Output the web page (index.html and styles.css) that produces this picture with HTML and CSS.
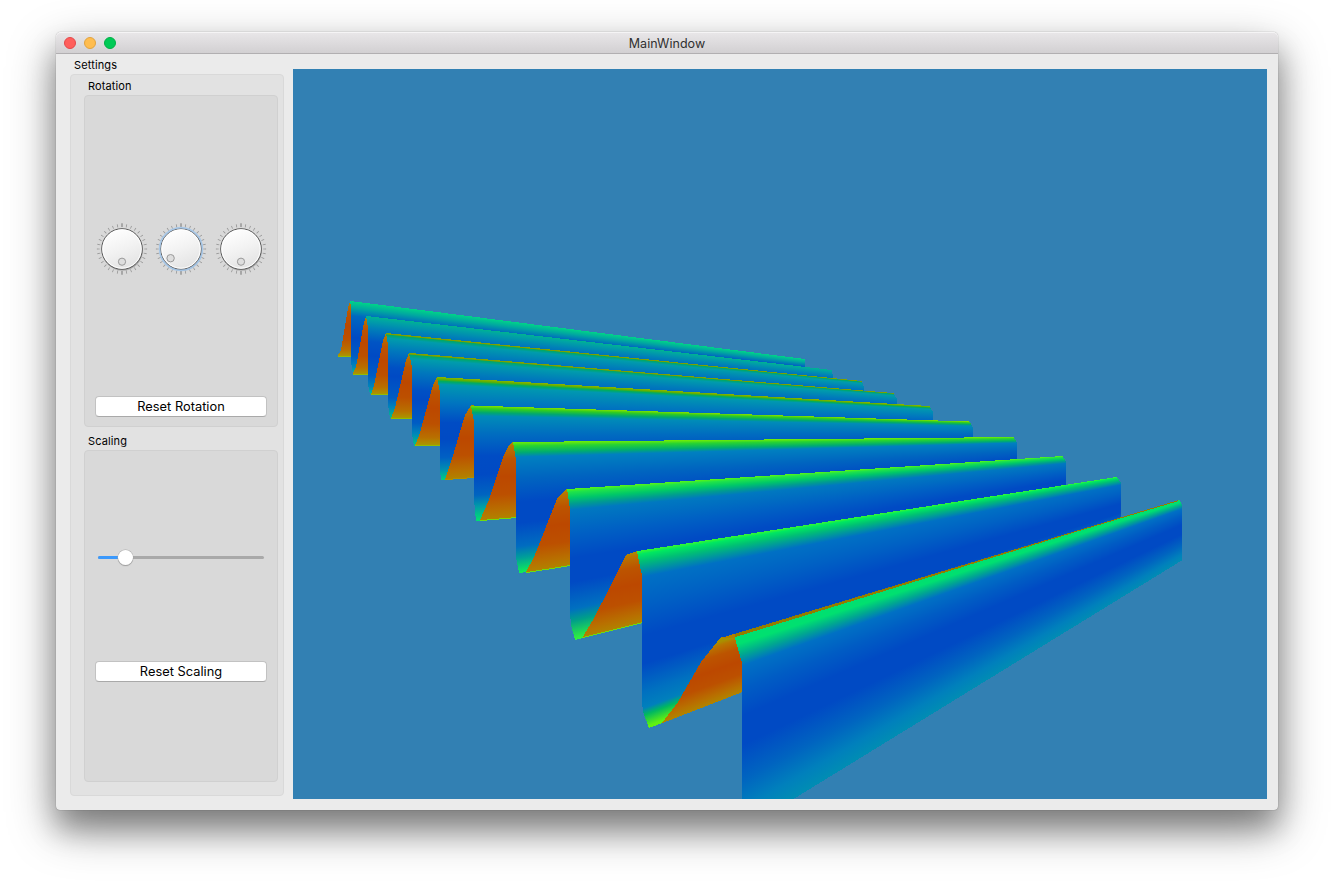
FILE: index.html
```html
<!DOCTYPE html>
<html lang="en">
<head>
<meta charset="utf-8">
<title>MainWindow</title>
<link rel="stylesheet" href="styles.css">
</head>
<body>
<svg width="0" height="0" class="defs">
  <defs>
    <linearGradient id="face" x1="0.3" y1="0" x2="0.7" y2="1"><stop offset="0" stop-color="#fff"/><stop offset="0.5" stop-color="#f2f2f2"/><stop offset="1" stop-color="#e2e2e2"/></linearGradient>
    <g id="dial">
      <circle class="ticks" cx="27" cy="27" r="23.6" pathLength="320"/>
      <path class="major" d="M27 1v4M27 49v4"/>
      <circle class="shade" cx="27.5" cy="28.2" r="20.5"/>
      <circle class="rim" cx="27" cy="27" r="20.3"/>
      <circle class="inner" cx="27" cy="27" r="19.2"/>
    </g>
  </defs>
</svg>
<main class="window">
  <header class="titlebar">
    <div class="lights"><i class="close"></i><i class="min"></i><i class="max"></i></div>
    <span class="title">MainWindow</span>
  </header>
  <div class="content">
    <aside class="settings">
      <h1 class="label">Settings</h1>
      <div class="group outer">
        <h2 class="label">Rotation</h2>
        <section class="group rotation">
          <div class="dials">
            <svg class="dial" viewBox="0 0 54 54"><use href="#dial"/><circle class="dot" cx="27" cy="39.7" r="3.6"/></svg>
            <svg class="dial active" viewBox="0 0 54 54"><use href="#dial"/><circle class="glow" cx="27" cy="27" r="21.4"/><circle class="dot" cx="16.6" cy="36.2" r="3.7"/></svg>
            <svg class="dial" viewBox="0 0 54 54"><use href="#dial"/><circle class="dot" cx="27" cy="39.7" r="3.6"/></svg>
          </div>
          <button class="button">Reset Rotation</button>
        </section>
        <h2 class="label second">Scaling</h2>
        <section class="group scaling">
          <div class="slider"><div class="fill"></div><div class="thumb"></div></div>
          <button class="button">Reset Scaling</button>
        </section>
      </div>
    </aside>
    <canvas id="plot" class="plot" width="974" height="730"></canvas>
  </div>
</main>
<script src="plot.js"></script>
</body>
</html>
```

FILE: styles.css
```css
* { box-sizing: border-box; }
body { margin: 0; padding: 32px 56px 0; width: 1334px; height: 890px; overflow: hidden; background: #fff; font-family: Inter, "Liberation Sans", sans-serif; color: #000; }
.defs { display: block; position: absolute; }
.window { width: 1222px; height: 778px; border-radius: 5px 5px 4px 4px; background: #ebebeb; box-shadow: 0 0 1px rgba(0,0,0,.55), 0 19px 28px rgba(0,0,0,.28), 0 18px 48px rgba(0,0,0,.38); }
.titlebar { height: 22px; display: grid; grid-template-columns: 100px 1fr 100px; align-items: center; border-bottom: 1px solid #b1afb1; border-radius: 5px 5px 0 0; background: linear-gradient(#e9e7e9, #d2d0d2); box-shadow: inset 0 1px #f5f4f5; }
.lights { display: flex; gap: 8px; padding-left: 8px; }
.lights i { width: 12px; height: 12px; border-radius: 50%; border: 1px solid; }
.close { background: #ff5f5c; border-color: #e5484a !important; }
.min { background: #ffbd4f; border-color: #e2a33e !important; }
.max { background: #00ca56; border-color: #00b045 !important; }
.title { text-align: center; font-size: 12.5px; line-height: 18px; padding-top: 2px; letter-spacing: .05px; color: #303030; }
.content { display: flex; padding: 0 11px 0 14px; gap: 9px; height: 756px; }
.settings { width: 214px; display: flex; flex-direction: column; }
.label { margin: 0; font-size: 11px; font-weight: 400; line-height: 14px; letter-spacing: .12px; }
.settings > .label { padding: 4px 0 0 4px; height: 20px; }
.group { border: 1px solid #d9d9d9; border-radius: 4px; }
.outer { height: 722px; padding: 0 5px 0 13px; background: #e2e2e2; }
.outer > .label { height: 20px; padding: 4px 0 0 4px; }
.outer > .second { height: 23px; padding-top: 7px; }
.rotation, .scaling { height: 332px; background: #d9d9d9; border-color: #d0d0d0; padding: 0 10px; display: flex; flex-direction: column; }
.rotation { padding-top: 126px; }
.dials { display: flex; gap: 5.5px; margin-left: -.5px; height: 54px; }
.dial { width: 54px; height: 54px; flex: none; overflow: visible; }
.ticks { fill: none; stroke: #999; stroke-width: 3; stroke-dasharray: 1.8 8.2; stroke-dashoffset: .9; }
.major { stroke: #8e8e8e; }
.shade { fill: rgba(0,0,0,.2); }
.rim { fill: url(#face); stroke: #555; stroke-width: 1; }
.inner { fill: none; stroke: #fff; stroke-width: 1; }
.dot { fill: #dedede; stroke: #999; stroke-width: 1; }
.glow { fill: none; stroke: #9fc4ea; stroke-width: 1.6; opacity: .85; }
.button { width: 172px; height: 21px; padding: 0; flex: none; font: 12.8px/19px Inter, "Liberation Sans", sans-serif; letter-spacing: .03px; color: #000; background: #fff; border: 1px solid #c2c2c2; border-bottom-color: #a9a9a9; border-radius: 4px; }
.rotation .button { margin-top: 120px; }
.scaling { padding-top: 105px; }
.slider { position: relative; margin: 0 3px 0 3px; width: 166px; height: 3px; border-radius: 2px; background: #a9a9a9; }
.fill { width: 22px; height: 3px; border-radius: 2px; background: #3b99fc; }
.thumb { position: absolute; left: 20px; top: -6px; width: 15px; height: 15px; border-radius: 50%; background: #fff; box-shadow: 0 0 0 .5px #aaa, 0 1px 1px rgba(0,0,0,.3); }
.scaling .button { margin-top: 102px; }
.plot { display: block; margin-top: 15px; width: 974px; height: 730px; background: #3280b3; }
```

FILE: plot.js
```js
// Corrugated surface, painted back to front one pixel column at a time.
const ctx = document.getElementById('plot').getContext('2d');
ctx.translate(-293, -69);

const BLUE = '#004ac4';
const far = [[0,'#00d488'],[.09,'#00a8a0'],[.2,'#0068c0'],[.5,BLUE],[.75,'#005cc4'],[.9,'#0088b8'],[1,'#00c890']];
const farB = [[0,'#00b490'],[.04,'#00a4a4'],[.15,'#0080b8'],[.32,'#0054c4'],[.5,BLUE],[.75,'#005cc4'],[.9,'#0088b8'],[1,'#00c890']];
const olive = [[0,'#80a800'],[.012,'#809c00'],[.022,'#00a868'],[.06,'#009cac'],[.2,'#0078bc'],[.4,'#0050c4'],[.5,BLUE],[.75,'#005cc4'],[.87,'#0088b8'],[1,'#00c880']];
const olive2 = [[0,'#8cb400'],[.02,'#60b000'],[.04,'#00ac60'],[.07,'#0098b0'],[.25,'#0074c0'],[.44,'#004cc4'],[.6,BLUE],[.78,'#0060c4'],[.9,'#0090b0'],[1,'#00d080']];
const lime = [[0,'#80e000'],[.025,'#30cc20'],[.06,'#00a870'],[.09,'#008cb8'],[.25,'#006cc0'],[.44,'#004cc4'],[.6,BLUE],[.78,'#0064c0'],[.88,'#009ca8'],[1,'#00e070']];
const lime2 = [[0,'#70ec08'],[.03,'#28d430'],[.08,'#00ac70'],[.115,'#0080c0'],[.28,'#0064c0'],[.46,BLUE],[.62,BLUE],[.8,'#006cc0'],[.89,'#00a098'],[1,'#10ec58']];
const mint = [[0,'#58f418'],[.02,'#20e448'],[.06,'#00c868'],[.1,'#009c90'],[.14,'#0078c0'],[.3,'#0060c4'],[.46,BLUE],[.62,BLUE],[.8,'#0070c0'],[.88,'#00a088'],[1,'#30f040']];
const mint2 = [[0,'#38f830'],[.02,'#00e860'],[.06,'#00c074'],[.1,'#009c98'],[.15,'#0070c4'],[.3,'#0060c4'],[.48,BLUE],[.64,BLUE],[.8,'#0070c0'],[.89,'#0080bc'],[.93,'#00b860'],[1,'#60f010']];
const near = [[0,'#00e070'],[.04,'#00e070'],[.1,'#00a890'],[.16,'#0070c4'],[.28,'#005cc4'],[.42,BLUE],[.57,BLUE],[.75,'#0064c0'],[.9,'#0080bc'],[1,'#008cb4']];

// apex: crest at the left edge; x: where the front face starts; r: crest at the right edge; rx: right side
// h: face heights left/right; side: orange flank from crest to foot; foot: front-face tail
const ridges = [
  {apex:[350,301], x:351, r:[804,359], rx:805, h:[73,36], stops:far,
   side:[[338,355],[341,350],[348,308],[350,301]], base:[357,357], foot:[[351,362],[353,374],[354,374]]},
  {apex:[366,316], x:368, r:[831,370], rx:833, h:[79,39], stops:farB,
   side:[[353,373],[356,367],[364,322],[366,316]], base:[375,375], foot:[[368,384],[370,394],[372,395]]},
  {apex:[386,333], x:388, r:[861,381], rx:864, h:[86,42], stops:olive,
   side:[[371,394],[374,386],[383,340],[386,333]], base:[395,395], foot:[[388,404],[390,418],[392,419]]},
  {apex:[409,353], x:412, r:[893,393], rx:897, h:[93,44], stops:olive,
   side:[[391,418],[395,408],[406,360],[409,353]], base:[419,419], foot:[[412,434],[414,446],[416,446]]},
  {apex:[437,377], x:440, r:[929,406], rx:933, h:[103,46], stops:olive2,
   side:[[415,445],[419,436],[433,385],[437,377]], base:[446,446], foot:[[440,470],[441,480],[446,480]]},
  {apex:[471,405.5], x:474, r:[969,421.5], rx:973, h:[115,49], stops:lime,
   side:[[445,479],[451,462],[465,415],[471,405]], base:[480,478], foot:[[474,500],[476,521],[480,521]]},
  {apex:[513,442], x:516, r:[1013,437], rx:1017, h:[131,51], stops:lime2,
   side:[[480,520],[488,502],[504,455],[509,445],[513,442]], base:[521,518], foot:[[516,557],[519,573],[527,572]]},
  {apex:[567,489], x:570, r:[1062,456], rx:1066, h:[151,54], stops:mint,
   side:[[526,572],[534,557],[557,499],[566,489]], base:[573,566], foot:[[570,612],[571,625],[575,640],[583,638]]},
  {apex:[637,551], x:642, r:[1116,477], rx:1121, h:[178,57], stops:mint2,
   side:[[582,638],[593,620],[612,583],[626,555],[637,551]], base:[638,623], foot:[[642,702],[643,712],[649,728],[662,723]]},
  {apex:[735,637], x:742, r:[1179,500], rx:1182, h:[193,61], stops:near,
   side:[[662,723],[678,702],[701,662],[721,637],[735,637]], base:[723,692], foot:null}
];

// Height of a polyline at x.
function at(points, x) {
  if (x <= points[0][0]) return points[0][1];
  for (let i = 1; i < points.length; i++) {
    const [ax, ay] = points[i - 1], [bx, by] = points[i];
    if (x <= bx) return ay + (by - ay) * (x - ax) / (bx - ax);
  }
  return points[points.length - 1][1];
}

function column(x, top, bottom, from, height, stops) {
  const y0 = Math.round(top), y1 = Math.round(bottom);
  if (y1 <= y0) return;
  const g = ctx.createLinearGradient(0, from, 0, from + height);
  for (const [t, c] of stops) g.addColorStop(t, c);
  ctx.fillStyle = g;
  ctx.fillRect(x, y0, 1, y1 - y0);
}

ridges.forEach((k, i) => {
  const next = ridges[i + 1];
  const slope = (k.r[1] - k.apex[1]) / (k.r[0] - k.apex[0]);
  const line = x => k.apex[1] + slope * (x - k.apex[0]);

  // Orange back flank
  const foot = k.side[0][0];
  const shin = i < 5 ? '#a89c00' : '#b08400';
  for (let x = foot; x < k.x; x++) {
    const base = k.base[0] + (k.base[1] - k.base[0]) * (x - foot) / (k.x - foot);
    const top = at(k.side, x + .5);
    const full = base - line(x);
    column(x, top, base, base - full, full,
      [[0,'#a89000'],[.06,'#b87400'],[.22,'#bc5400'],[.45,'#bc4800'],[.68,'#bc5000'],[.88,'#b87000'],[1,shin]]);
    if (i < 9) {
      ctx.fillStyle = i < 5 ? '#94bc00' : i < 6 ? '#b09000' : '#70dc10';
      ctx.fillRect(x, Math.round(base) - 1, 1, 1);
    }
  }

  // Front face
  for (let x = k.apex[0]; x < k.rx; x++) {
    const u = (x - k.x) / (k.rx - k.x);
    const h = k.h[0] + (k.h[1] - k.h[0]) * u;
    const crest = line(x);
    const drop = x > k.r[0] ? 7 * (x - k.r[0]) / (k.rx - k.r[0]) : 0;
    let bottom = crest + h;
    if (x < k.x) {
      bottom = crest + 3 + (x - k.apex[0]) / (k.x - k.apex[0]) * h * .14;
    } else if (next && x < next.x) {
      const b = next.side[0][0];
      bottom = x < b ? at(k.foot, x + .5)
        : next.base[0] + (next.base[1] - next.base[0]) * (x - b) / (next.x - b);
    } else if (!next) {
      bottom = 560 + (1182 - x) * .6144;
    }
    column(x, crest + drop, bottom, crest, h, k.stops);
  }
});

// Crest of the nearest ridge, seen from behind
for (let x = 722; x < 1178; x++) {
  const crest = 637 - (x - 735) * 137 / 444;
  const y = 637.8 - (x - 721) * 137.8 / 457;
  const y0 = Math.round(y);
  const y1 = x < 735 ? 638 : Math.max(Math.round(crest), y0 + 1);
  ctx.fillStyle = x < 735 ? '#b08000' : '#947c00';
  ctx.fillRect(x, y0, 1, Math.max(0, y1 - y0));
}
```
